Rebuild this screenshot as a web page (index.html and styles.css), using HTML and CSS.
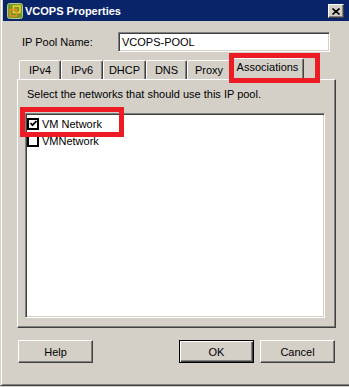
FILE: index.html
```html
<!DOCTYPE html>
<html>
<head>
<meta charset="utf-8">
<title>VCOPS Properties</title>
<link rel="stylesheet" href="styles.css">
</head>
<body>
<div class="window">
  <div class="titlebar">
    <svg class="app-icon" width="16" height="16" viewBox="0 0 16 16">
      <rect x="0.5" y="0.5" width="15" height="15" rx="2" fill="#6f9a2a" stroke="#b9c98f"/>
      <rect x="6.5" y="3" width="6.5" height="6.5" fill="none" stroke="#f7cf2e" stroke-width="1.5"/>
      <rect x="3" y="6.5" width="6.5" height="6.5" fill="none" stroke="#ee8a1c" stroke-width="1.5"/>
    </svg>
    <span class="title">VCOPS Properties</span>
    <span class="close-btn">
      <svg width="8" height="7" viewBox="0 0 8 7"><path d="M0.5 0.5 L7.5 6.5 M7.5 0.5 L0.5 6.5" stroke="#000" stroke-width="1.6"/></svg>
    </span>
  </div>
  <div class="content">
    <div class="field-row">
      <span class="field-label">IP Pool Name:</span>
      <div class="textbox">VCOPS-POOL</div>
    </div>
    <div class="tabs">
      <span class="tab tab-ipv4">IPv4</span>
      <span class="tab tab-ipv6">IPv6</span>
      <span class="tab tab-dhcp">DHCP</span>
      <span class="tab tab-dns">DNS</span>
      <span class="tab tab-proxy">Proxy</span>
      <span class="tab tab-active">Associations</span>
    </div>
    <div class="panel">
      <p class="hint">Select the networks that should use this IP pool.</p>
      <div class="listbox">
        <div class="list-item">
          <span class="checkbox"><svg width="7" height="7" viewBox="0 0 7 7"><path d="M0.5 3 L2.5 5.2 L6.5 1" fill="none" stroke="#000" stroke-width="1.8"/></svg></span>
          <span class="item-text">VM Network</span>
        </div>
        <div class="list-item">
          <span class="checkbox"></span>
          <span class="item-text">VMNetwork</span>
        </div>
      </div>
    </div>
    <div class="buttons">
      <span class="btn btn-help">Help</span>
      <span class="btn btn-default">OK</span>
      <span class="btn">Cancel</span>
    </div>
  </div>
  <div class="mark mark-tab"></div>
  <div class="mark mark-item"></div>
</div>
</body>
</html>
```
FILE: styles.css
```css
* { box-sizing: border-box; }
html, body { margin: 0; padding: 0; }
body {
  width: 349px;
  height: 387px;
  overflow: hidden;
  background: #d4d0c8;
  font-family: "Liberation Sans", Arial, sans-serif;
  font-size: 11px;
  color: #000;
}
.window {
  position: relative;
  width: 349px;
  height: 386px;
  background: #d4d0c8;
  border-left: 1px solid #d4d0c8;
  border-bottom: 1px solid #404040;
  box-shadow: inset 1px 0 0 #fff, inset 0 -1px 0 #808080;
}
.titlebar {
  height: 21px;
  margin-left: 2px;
  padding: 0 5px 0 4px;
  background: #0a246a;
  color: #fff;
  display: flex;
  align-items: center;
}
.app-icon { flex: none; }
.title {
  margin-left: 2px;
  font-weight: bold;
  font-size: 11px;
  flex: 1;
}
.close-btn {
  width: 16px;
  height: 14px;
  margin-top: 1px;
  background: #d4d0c8;
  border: 1px solid;
  border-color: #fff #404040 #404040 #fff;
  box-shadow: inset -1px -1px 0 #808080;
  display: flex;
  align-items: center;
  justify-content: center;
}
.content {
  padding: 11px 13px 0 16px;
}
.field-row {
  display: flex;
  align-items: center;
  height: 20px;
  padding: 0 6px 0 5px;
}
.field-label { width: 96px; flex: none; }
.textbox {
  flex: 1;
  height: 20px;
  background: #fff;
  border: 1px solid;
  border-color: #808080 #fff #fff #808080;
  box-shadow: inset 1px 1px 0 #404040, inset -1px -1px 0 #d4d0c8;
  padding: 3px 3px 0 3px;
  line-height: 13px;
}
.tabs {
  display: flex;
  align-items: flex-end;
  height: 21px;
  margin-top: 6px;
  padding-left: 2px;
  position: relative;
  z-index: 1;
}
.tab {
  flex: none;
  height: 19px;
  padding-top: 3px;
  line-height: 13px;
  text-align: center;
  background: #d4d0c8;
  border-top: 1px solid #fff;
  border-left: 1px solid #fff;
  border-right: 1px solid #404040;
  box-shadow: inset -1px 0 0 #808080;
  border-radius: 2px 2px 0 0;
}
.tab-ipv4 { width: 42px; }
.tab-ipv6 { width: 42px; }
.tab-dhcp { width: 43px; }
.tab-dns { width: 41px; }
.tab-proxy { width: 44px; }
.tab-active {
  width: 73px;
  height: 22px;
  margin: 0 0 -1px 0;
  padding-top: 2px;
}
.panel {
  height: 249px;
  border: 1px solid;
  border-color: #fff #404040 #404040 #fff;
  box-shadow: inset -1px -1px 0 #808080;
  padding: 8px 10px 0 7px;
}
.hint {
  margin: 0 0 12px 2px;
  line-height: 13px;
}
.listbox {
  width: 300px;
  height: 205px;
  background: #fff;
  border: 1px solid;
  border-color: #808080 #fff #fff #808080;
  box-shadow: inset 1px 1px 0 #404040, inset -1px -1px 0 #d4d0c8;
  padding: 1px 1px;
}
.list-item {
  display: flex;
  align-items: center;
  height: 17px;
}
.checkbox {
  width: 12px;
  height: 12px;
  border: 2px solid #000;
  background: #fff;
  display: flex;
  align-items: center;
  justify-content: center;
  flex: none;
}
.item-text { margin-left: 3px; }
.buttons {
  display: flex;
  gap: 6px;
  margin-top: 12px;
  padding: 0 1px 0 1px;
}
.btn {
  width: 75px;
  height: 23px;
  border: 1px solid;
  border-color: #fff #404040 #404040 #fff;
  box-shadow: inset -1px -1px 0 #808080;
  display: flex;
  align-items: center;
  justify-content: center;
}
.btn-help { margin-right: auto; }
.btn-default {
  border-color: #000;
  box-shadow: inset 1px 1px 0 #fff, inset -1px -1px 0 #404040, inset -2px -2px 0 #808080;
}
.mark {
  position: absolute;
  border: 5px solid #ed1c24;
  z-index: 2;
}
.mark-tab { left: 228px; top: 53px; width: 91px; height: 30px; }
.mark-item { left: 19px; top: 107px; width: 104px; height: 30px; }
```
